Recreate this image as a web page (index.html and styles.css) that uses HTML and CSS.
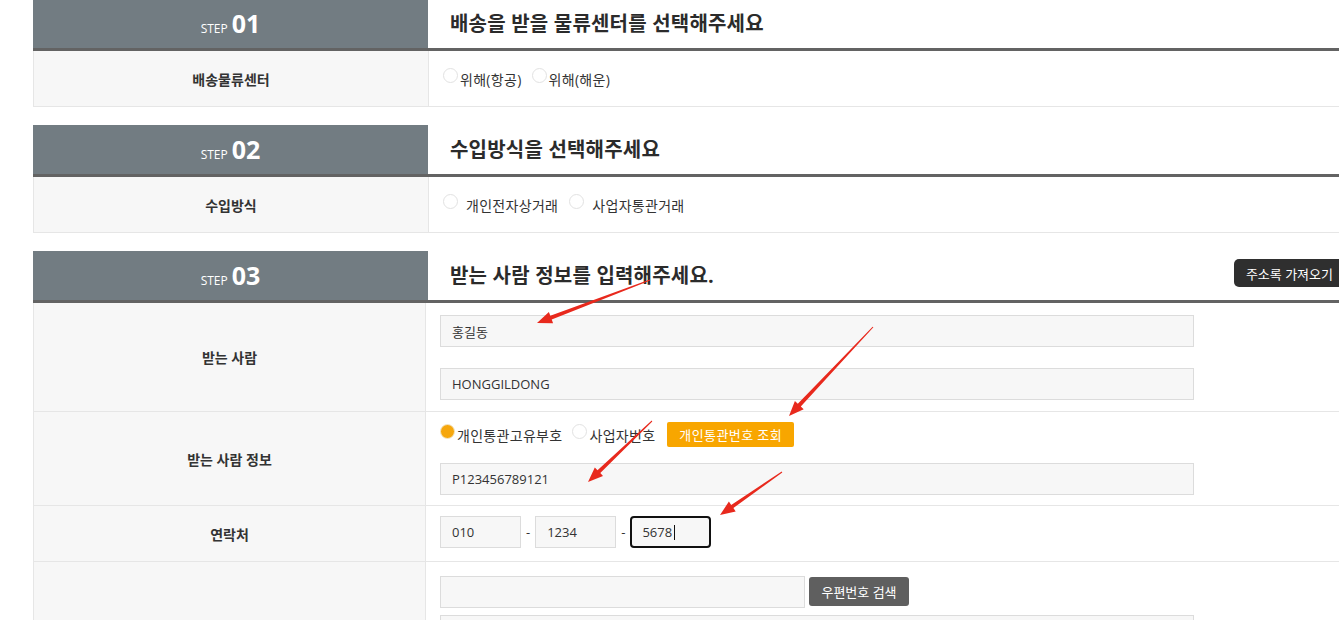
FILE: index.html
```html
<!DOCTYPE html>
<html lang="ko">
<head>
    <meta charset="UTF-8">
    <meta name="viewport" content="width=device-width, initial-scale=1.0">
    <title>배송 신청</title>
    <link rel="stylesheet" href="styles.css">
</head>
<body>
    <div class="order-form">

        <div class="step">
            <div class="step-head">
                <div class="step-no"><span class="step-word">STEP</span><span class="step-num">01</span></div>
                <h2 class="step-title">배송을 받을 물류센터를 선택해주세요</h2>
            </div>
            <div class="row">
                <div class="row-label">배송물류센터</div>
                <div class="row-field">
                    <div class="radio-line tight">
                        <label><input type="radio" name="center" class="radio">위해(항공)</label>
                        <label><input type="radio" name="center" class="radio">위해(해운)</label>
                    </div>
                </div>
            </div>
        </div>

        <div class="step">
            <div class="step-head">
                <div class="step-no"><span class="step-word">STEP</span><span class="step-num">02</span></div>
                <h2 class="step-title">수입방식을 선택해주세요</h2>
            </div>
            <div class="row">
                <div class="row-label">수입방식</div>
                <div class="row-field">
                    <div class="radio-line spaced">
                        <label><input type="radio" name="import" class="radio">개인전자상거래</label>
                        <label><input type="radio" name="import" class="radio">사업자통관거래</label>
                    </div>
                </div>
            </div>
        </div>

        <div class="step">
            <div class="step-head">
                <div class="step-no"><span class="step-word">STEP</span><span class="step-num">03</span></div>
                <h2 class="step-title">받는 사람 정보를 입력해주세요.</h2>
                <button class="btn-dark">주소록 가져오기</button>
            </div>
            <div class="row narrow">
                <div class="row-label">받는 사람</div>
                <div class="row-field tall">
                    <input type="text" class="text-input" value="홍길동">
                    <input type="text" class="text-input" value="HONGGILDONG">
                </div>
            </div>
            <div class="row narrow">
                <div class="row-label">받는 사람 정보</div>
                <div class="row-field customs">
                    <div class="radio-line tight">
                        <label><input type="radio" name="customs" class="radio" checked>개인통관고유부호</label>
                        <label><input type="radio" name="customs" class="radio">사업자번호</label>
                        <button class="btn-orange">개인통관번호 조회</button>
                    </div>
                    <input type="text" class="text-input" value="P123456789121">
                </div>
            </div>
            <div class="row narrow">
                <div class="row-label">연락처</div>
                <div class="row-field phone-field">
                    <div class="phone">
                        <input type="text" class="text-input short" value="010">
                        <span class="dash">-</span>
                        <input type="text" class="text-input short" value="1234">
                        <span class="dash">-</span>
                        <span class="focus-wrap">
                            <input type="text" class="text-input short focused" value="5678">
                            <span class="caret"></span>
                        </span>
                    </div>
                </div>
            </div>
            <div class="row narrow">
                <div class="row-label"></div>
                <div class="row-field address">
                    <div class="zip-line">
                        <input type="text" class="text-input zip" value="">
                        <button class="btn-gray">우편번호 검색</button>
                    </div>
                    <input type="text" class="text-input" value="">
                </div>
            </div>
        </div>
    </div>

    <svg class="marks" width="1339" height="620" viewBox="0 0 1339 620">
        <polygon points="649.8,279.5 550.3,315.8 548.9,312.1 537,323 553.1,323.3 551.7,319.6 650.2,280.5"/>
        <polygon points="872.6,326.7 797.8,403.7 794.9,401.0 789,416 803.7,409.2 800.8,406.5 873.4,327.3"/>
        <polygon points="651.7,420.6 597.5,470.2 594.8,467.4 588,482 603.0,476.0 600.3,473.1 652.3,421.4"/>
        <polygon points="781.7,471.6 731.2,504.9 728.9,501.6 720,515 735.7,511.4 733.4,508.1 782.3,472.4"/>
    </svg>
</body>
</html>
```

FILE: styles.css
```css
body {
    margin: 0;
    padding: 0;
    overflow: hidden;
    background: #fff;
    font-family: "Open Sans", "Noto Sans CJK KR", sans-serif;
    color: #333;
}

.order-form {
    margin: -1px 0 0 33px;
    width: 1320px;
}

.step {
    margin-bottom: 18px;
}

.step-head {
    display: flex;
    height: 49px;
    border-bottom: 3px solid #636363;
}

.step-no {
    flex: none;
    width: 395px;
    background-color: #727c82;
    color: #fff;
    display: flex;
    align-items: baseline;
    justify-content: center;
    padding-top: 9px;
    box-sizing: border-box;
}

.step-word {
    font-size: 12px;
    margin-right: 4px;
}

.step-num {
    font-size: 25px;
    font-weight: 700;
    line-height: 30px;
}

.step-title {
    flex: 1;
    margin: 0;
    padding-left: 22px;
    font-size: 20px;
    font-weight: 700;
    letter-spacing: 0.2px;
    line-height: 49px;
    color: #2b2b2b;
}

.btn-dark {
    align-self: flex-start;
    margin: 8px 8px 0 0;
    height: 28px;
    padding: 0 12px;
    background-color: #2f2f2f;
    color: #fff;
    border: none;
    border-radius: 5px;
    font-family: inherit;
    font-size: 13px;
}

.row {
    display: flex;
    border-left: 1px solid #e6e6e6;
    border-bottom: 1px solid #e6e6e6;
}

.row-label {
    flex: none;
    width: 394px;
    min-height: 55px;
    background-color: #f7f7f7;
    border-right: 1px solid #e6e6e6;
    display: flex;
    align-items: center;
    justify-content: center;
    font-size: 14px;
    font-weight: 700;
    color: #333;
}

.row.narrow .row-label {
    width: 391px;
}

.row-field {
    flex: 1;
    padding: 11px 14px;
    display: flex;
    flex-direction: column;
    justify-content: center;
    gap: 16px;
}

.row-field.tall {
    padding-top: 12px;
    gap: 21px;
}

.row-field.customs {
    padding: 10px 14px;
}

.row-field.phone-field {
    padding: 10px 14px 13px;
}

.row-field.address {
    padding-top: 14px;
    gap: 7px;
}

.radio-line {
    display: flex;
    align-items: center;
    font-size: 14px;
    letter-spacing: 0.3px;
    color: #333;
}

.radio-line label {
    display: flex;
    align-items: center;
}

.radio {
    appearance: none;
    -webkit-appearance: none;
    width: 15px;
    height: 15px;
    margin: 0 2px 6px 0;
    border: 1px solid #e2e2e2;
    border-radius: 50%;
    background: #fff;
}

.radio:checked {
    background-color: #f6a70d;
    border-color: #f3e6c8;
}

.radio-line.tight label + label {
    margin-left: 10px;
}

.radio-line.spaced .radio {
    margin-right: 8px;
}

.radio-line.spaced label + label {
    margin-left: 11px;
}

.btn-orange {
    margin-left: 12px;
    height: 25px;
    padding: 0 12px;
    background-color: #f8a600;
    color: #fff;
    border: none;
    border-radius: 2px;
    font-family: inherit;
    font-size: 13px;
    letter-spacing: 0.4px;
}

.text-input {
    box-sizing: border-box;
    width: 754px;
    height: 32px;
    padding: 0 11px;
    background-color: #f7f7f7;
    border: 1px solid #dcdcdc;
    font-family: inherit;
    font-size: 13px;
    color: #333;
    outline: none;
}

.phone {
    display: flex;
    align-items: center;
}

.text-input.short {
    width: 81px;
}

.dash {
    margin: 0 5px;
    font-size: 13px;
}

.focus-wrap {
    position: relative;
    display: flex;
}

.text-input.focused {
    border: 2px solid #111;
    border-radius: 4px;
    padding-left: 10px;
}

.caret {
    position: absolute;
    left: 44px;
    top: 9px;
    width: 1px;
    height: 15px;
    background: #111;
}

.zip-line {
    display: flex;
    align-items: flex-start;
}

.text-input.zip {
    width: 365px;
}

.btn-gray {
    margin: 1px 0 0 4px;
    height: 29px;
    width: 100px;
    background-color: #5f5f5f;
    color: #fff;
    border: none;
    border-radius: 3px;
    font-family: inherit;
    font-size: 13px;
}

.marks {
    position: absolute;
    top: 0;
    left: 0;
    pointer-events: none;
}

.marks polygon {
    fill: #e8291d;
}
```
